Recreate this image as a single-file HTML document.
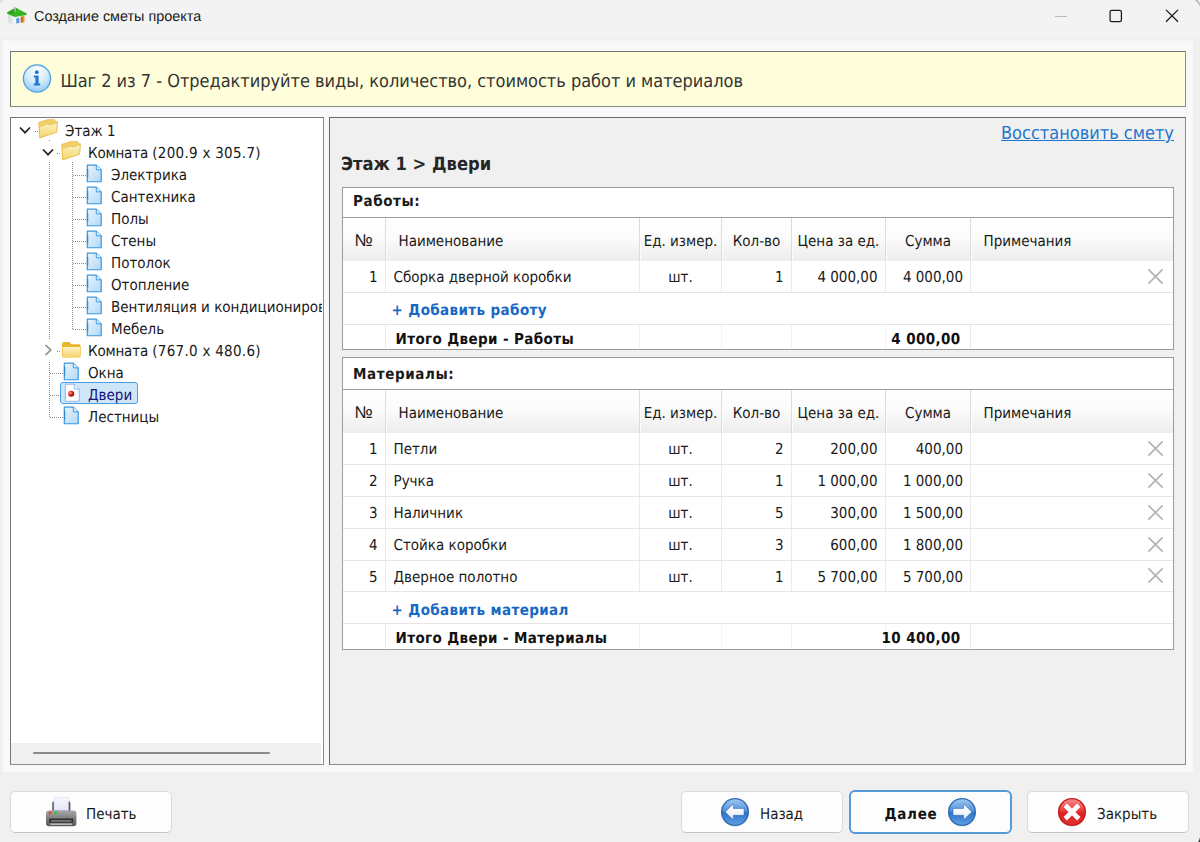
<!DOCTYPE html>
<html lang="ru">
<head>
<meta charset="utf-8">
<title>Создание сметы проекта</title>
<style>
*{box-sizing:border-box;margin:0;padding:0}
html,body{width:1200px;height:842px;overflow:hidden}
body{position:relative;background:#f0f0f0;text-rendering:geometricPrecision;font-family:"DejaVu Sans Condensed","DejaVu Sans","Liberation Sans",sans-serif;font-size:15px;color:#1a1a1a}
.abs{position:absolute}
#titlebar{left:0;top:0;width:1200px;height:43px;background:linear-gradient(to bottom,#f3f3f3 0,#f3f3f3 35px,#f0f0f0 38.5px,#f9f9f9 42px,#f9f9f9 43px)}
#title{left:34px;top:0;height:34px;line-height:34px;font-family:"Liberation Sans",sans-serif;font-size:14.4px;color:#1b1b1b;white-space:nowrap}
#frameR{left:1193px;top:40px;width:7px;height:802px;background:#f0f0f0}
#frameL{left:0;top:40px;width:3px;height:802px;background:#f0f0f0}
#upper{left:3px;top:42px;width:1190px;height:730px;background:#f9f9f9}
#info{left:10px;top:51px;width:1176px;height:56px;background:#fefeda;border:1px solid #8c8c8c;border-top-color:#767676;border-left-color:#767676}
#infotext{left:60.4px;top:53px;height:56px;line-height:57px;font-size:18px;letter-spacing:-0.02px;color:#333;white-space:nowrap}
#tree{left:10px;top:117px;width:314px;height:648px;background:#fff;border:1px solid #8c8c8c;border-top-color:#767676;border-left-color:#767676}
#treeclip{left:0;top:0;width:321.5px;height:764px;overflow:hidden}
#hscroll{left:11px;top:743px;width:310px;height:21px;background:#f0f0f0}
#hthumb{left:33px;top:752px;width:237px;height:2px;background:#8a8a8a;border-radius:1px}
#panel{left:329px;top:117px;width:857px;height:648px;background:#f0f0f0;border:1px solid #8c8c8c;border-top-color:#6a6a6a;border-left-color:#6a6a6a}
.tr{position:absolute;height:22px;line-height:22px;white-space:nowrap;font-size:15px;color:#1a1a1a}
.selt{color:#15157a}
.sel{background:#cfe6f9;border:1px solid #4a9fe6;border-radius:3px}
.vdot{width:1px;background-image:repeating-linear-gradient(to bottom,#8e8e8e 0,#8e8e8e 1px,transparent 1px,transparent 2px)}
.hdot{height:1px;background-image:repeating-linear-gradient(to right,#8e8e8e 0,#8e8e8e 1px,transparent 1px,transparent 2px)}
#crumb{left:341px;top:153px;height:24px;line-height:24px;font-size:18.2px;font-weight:bold;color:#262626;white-space:nowrap}
#restore{left:1001px;top:122px;height:24px;line-height:24px;font-size:18px;color:#2274cc;text-decoration:underline;white-space:nowrap}
.tbox{background:#fff;border:1px solid #9c9c9c}
.ttl{font-weight:bold;letter-spacing:0.6px;color:#222}
.hdr{background:linear-gradient(to bottom,#ffffff 0%,#fbfbfb 45%,#ededed 100%)}
.hsep{width:2px;background:linear-gradient(to right,#dcdcdc 0,#dcdcdc 1px,#fcfcfc 1px,#fcfcfc 2px)}
.dsep{width:1px;background:#ebebeb}
.dsep2{width:1px;background:#f3f3f3}
.rsep{height:1px;background:#e5e5e5}
.cell{white-space:nowrap;font-size:15px;line-height:18px;height:18px;color:#1a1a1a}
.add{font-weight:bold;letter-spacing:0.38px;color:#1768c4}
.tot{font-weight:bold;letter-spacing:0.38px;color:#111}
.btn{background:#fdfdfd;border:1px solid #dadada;border-bottom-color:#c4c4c4;border-radius:5px}
.btnf{border:2px solid #5599d9;border-radius:6px}
.btxt{height:20px;line-height:20px;font-size:15px;color:#1a1a1a;white-space:nowrap}
.btb{font-weight:bold;letter-spacing:0.72px;color:#111}
.no{font-family:"Liberation Sans",sans-serif;font-size:17px;line-height:1px;position:relative;left:-0.5px}
</style>
</head>
<body>
<svg width="0" height="0" style="position:absolute">
<defs>
<linearGradient id="gdoc" x1="0" y1="0" x2="1" y2="1"><stop offset="0" stop-color="#eaf5fd"/><stop offset="1" stop-color="#b3d8f4"/></linearGradient>
<linearGradient id="gfold" x1="0" y1="0" x2="0" y2="1"><stop offset="0" stop-color="#fdf2c4"/><stop offset="1" stop-color="#f5d468"/></linearGradient>
<radialGradient id="gred" cx="0.35" cy="0.35" r="0.7"><stop offset="0" stop-color="#ff9a9a"/><stop offset="0.5" stop-color="#e02020"/><stop offset="1" stop-color="#a00000"/></radialGradient>
<g id="doc"><path d="M1.3 1.2 H10.3 L15.2 6 V18.3 H1.3 Z" fill="url(#gdoc)" stroke="#3c97de" stroke-width="1.2" stroke-linejoin="round"/><path d="M10.3 1.2 V6 H15.2" fill="#e4f2fc" stroke="#3c97de" stroke-width="1"/><path d="M1.6 5 V14" stroke="#2f86cf" stroke-width="1.3"/></g>
<g id="docsel"><path d="M1.3 1.2 H10.3 L15.2 6 V18.3 H1.3 Z" fill="#fdfdff" stroke="#8db9e3" stroke-width="1" stroke-linejoin="round"/><path d="M10.3 1.2 V6 H15.2" fill="#eef5fc" stroke="#8db9e3" stroke-width="1"/><circle cx="7.2" cy="10.8" r="3" fill="url(#gred)"/></g>
<g id="fopen"><path d="M0.7 3.4 L9.9 0.6 L16.7 0.7 L17.4 2.8 L19.4 2.8 L18.5 13.2 L1.7 18.8 Z" fill="#f3d06a" stroke="#dfb344" stroke-width="0.7" stroke-linejoin="round"/><path d="M1.4 7.8 L9.9 5 L11.5 5.9 L19.2 3.8 L18.5 13.2 L1.7 18.8 Z" fill="url(#gfold)" stroke="#e2b94a" stroke-width="0.6" stroke-linejoin="round"/></g>
<g id="fclosed"><path d="M1 3 Q1 1 3 1 H8.5 L10.5 3.2 H18 Q19.6 3.2 19.6 4.8 V15 Q19.6 16.6 18 16.6 H2.6 Q1 16.6 1 15 Z" fill="#eab52e"/><path d="M1.6 6 H19 V14.8 Q19 16 17.8 16 H2.8 Q1.6 16 1.6 14.8 Z" fill="url(#gfold)"/></g>
</defs>
</svg>
<div id="titlebar" class="abs"></div>
<div id="frameL" class="abs"></div>
<div id="frameR" class="abs"></div>
<div id="title" class="abs">Создание сметы проекта</div>
<div id="upper" class="abs"></div>
<div id="info" class="abs"></div>
<div id="infotext" class="abs">Шаг 2 из 7 - Отредактируйте виды, количество, стоимость работ и материалов</div>
<div id="tree" class="abs"></div>
<div id="treeclip" class="abs">
<div class="abs vdot" style="left:49px;top:140px;height:1px"></div>
<div class="abs vdot" style="left:49px;top:162px;height:178px"></div>
<div class="abs vdot" style="left:49px;top:362px;height:56px"></div>
<div class="abs vdot" style="left:72px;top:162px;height:168px"></div>
<div class="abs hdot" style="left:35px;top:131px;width:4px"></div>
<div class="abs hdot" style="left:57px;top:153px;width:4px"></div>
<div class="abs hdot" style="left:57px;top:351px;width:4px"></div>
<div class="abs hdot" style="left:73px;top:175px;width:14px"></div>
<div class="abs hdot" style="left:73px;top:197px;width:14px"></div>
<div class="abs hdot" style="left:73px;top:219px;width:14px"></div>
<div class="abs hdot" style="left:73px;top:241px;width:14px"></div>
<div class="abs hdot" style="left:73px;top:263px;width:14px"></div>
<div class="abs hdot" style="left:73px;top:285px;width:14px"></div>
<div class="abs hdot" style="left:73px;top:307px;width:14px"></div>
<div class="abs hdot" style="left:73px;top:329px;width:14px"></div>
<div class="abs hdot" style="left:50px;top:373px;width:14px"></div>
<div class="abs hdot" style="left:50px;top:395px;width:14px"></div>
<div class="abs hdot" style="left:50px;top:417px;width:14px"></div>
<svg class="abs" style="left:18px;top:123px" width="14" height="14" viewBox="0 0 14 14"><path d="M2 4.5 L7 9.7 L12 4.5" fill="none" stroke="#222" stroke-width="1.7"/></svg>
<svg class="abs" style="left:38px;top:119px" width="21" height="20" viewBox="0 0 21 20"><use href="#fopen"/></svg>
<div class="tr" style="left:65px;top:120px">Этаж 1</div>
<svg class="abs" style="left:41px;top:145px" width="14" height="14" viewBox="0 0 14 14"><path d="M2 4.5 L7 9.7 L12 4.5" fill="none" stroke="#222" stroke-width="1.7"/></svg>
<svg class="abs" style="left:61px;top:141px" width="21" height="20" viewBox="0 0 21 20"><use href="#fopen"/></svg>
<div class="tr" style="left:88px;top:142px"><span style="letter-spacing:-0.18px">Комната</span> <span style="letter-spacing:0.28px">(200.9 x 305.7)</span></div>
<svg class="abs" style="left:86px;top:163.6px" width="17" height="19.4" preserveAspectRatio="none" viewBox="0 0 17 20"><use href="#doc"/></svg>
<div class="tr" style="left:111px;top:164px">Электрика</div>
<svg class="abs" style="left:86px;top:185.6px" width="17" height="19.4" preserveAspectRatio="none" viewBox="0 0 17 20"><use href="#doc"/></svg>
<div class="tr" style="left:111px;top:186px">Сантехника</div>
<svg class="abs" style="left:86px;top:207.6px" width="17" height="19.4" preserveAspectRatio="none" viewBox="0 0 17 20"><use href="#doc"/></svg>
<div class="tr" style="left:111px;top:208px">Полы</div>
<svg class="abs" style="left:86px;top:229.6px" width="17" height="19.4" preserveAspectRatio="none" viewBox="0 0 17 20"><use href="#doc"/></svg>
<div class="tr" style="left:111px;top:230px">Стены</div>
<svg class="abs" style="left:86px;top:251.6px" width="17" height="19.4" preserveAspectRatio="none" viewBox="0 0 17 20"><use href="#doc"/></svg>
<div class="tr" style="left:111px;top:252px">Потолок</div>
<svg class="abs" style="left:86px;top:273.6px" width="17" height="19.4" preserveAspectRatio="none" viewBox="0 0 17 20"><use href="#doc"/></svg>
<div class="tr" style="left:111px;top:274px">Отопление</div>
<svg class="abs" style="left:86px;top:295.6px" width="17" height="19.4" preserveAspectRatio="none" viewBox="0 0 17 20"><use href="#doc"/></svg>
<div class="tr" style="left:111px;top:296px">Вентиляция и кондиционирование</div>
<svg class="abs" style="left:86px;top:317.6px" width="17" height="19.4" preserveAspectRatio="none" viewBox="0 0 17 20"><use href="#doc"/></svg>
<div class="tr" style="left:111px;top:318px">Мебель</div>
<svg class="abs" style="left:41px;top:343px" width="14" height="14" viewBox="0 0 14 14"><path d="M4.5 2 L9.7 7 L4.5 12" fill="none" stroke="#8c8c8c" stroke-width="1.7"/></svg>
<svg class="abs" style="left:61px;top:341px" width="21" height="18" viewBox="0 0 21 18"><use href="#fclosed"/></svg>
<div class="tr" style="left:88px;top:340px"><span style="letter-spacing:-0.18px">Комната</span> <span style="letter-spacing:0.28px">(767.0 x 480.6)</span></div>
<svg class="abs" style="left:63px;top:361.6px" width="17" height="19.4" preserveAspectRatio="none" viewBox="0 0 17 20"><use href="#doc"/></svg>
<div class="tr" style="left:88px;top:362px">Окна</div>
<div class="abs sel" style="left:60px;top:382px;width:78px;height:22px"></div>
<svg class="abs" style="left:64px;top:383px" width="17" height="20" viewBox="0 0 17 20"><use href="#docsel"/></svg>
<div class="tr selt" style="left:88px;top:384px">Двери</div>
<svg class="abs" style="left:63px;top:405.6px" width="17" height="19.4" preserveAspectRatio="none" viewBox="0 0 17 20"><use href="#doc"/></svg>
<div class="tr" style="left:88px;top:406px">Лестницы</div>
</div>
<div id="hscroll" class="abs"></div>
<div id="hthumb" class="abs"></div>
<div id="panel" class="abs"></div>
<!-- title bar icon + controls -->
<svg class="abs" style="left:6px;top:5px" width="24" height="22" viewBox="6 5 24 22">
<defs><linearGradient id="gwall" x1="0" y1="0" x2="1" y2="0"><stop offset="0" stop-color="#d4d6d9"/><stop offset="1" stop-color="#f4f5f7"/></linearGradient></defs>
<path d="M8.4 14 L15 16.4 L15 25 L8.4 23 Z" fill="url(#gwall)"/>
<path d="M15 16.4 L25.6 13.8 L25.6 22.6 L15 25 Z" fill="#f3f4f6"/>
<path d="M16.2 18.6 L19.4 17.8 L19.4 22.9 L16.2 23.6 Z" fill="#5a9be6"/>
<path d="M20.6 16.6 L24.5 15.8 L24.5 22.2 L20.6 23 Z" fill="#e8943a"/>
<path d="M21.3 17 L22.6 16.8 L22.6 22.3 L21.3 22.6 Z" fill="#a8601a"/>
<path d="M7.2 12.6 L14.6 8.2 Q15.4 7.8 16.4 8.2 L27 13.6 L26.4 14.9 L15 17 L7.6 14 Z" fill="#35b522"/>
<path d="M7.2 12.6 L14.6 8.2 Q15.4 7.8 16.4 8.2 L18 9.1 L12.8 14 L7.6 13.4 Z" fill="#2aa317"/>
<rect x="14.2" y="7" width="1.7" height="4.6" fill="#b4b7ba"/>
</svg>
<div class="abs" style="left:1055px;top:16px;width:12px;height:1px;background:#b8babc"></div>
<svg class="abs" style="left:1108px;top:8px" width="16" height="16" viewBox="0 0 16 16"><rect x="2.1" y="2.3" width="11.3" height="11.3" rx="1.6" fill="none" stroke="#1a1a1a" stroke-width="1.25"/></svg>
<svg class="abs" style="left:1164px;top:8px" width="16" height="16" viewBox="0 0 16 16"><path d="M2 1.9 L14 13.7 M14 1.9 L2 13.7" fill="none" stroke="#1a1a1a" stroke-width="1.25"/></svg>
<svg class="abs" style="left:1192px;top:0" width="8" height="8" viewBox="0 0 8 8"><path d="M3.5 -0.5 Q7 2 8.5 6" fill="none" stroke="#b9babc" stroke-width="1.6"/></svg>
<svg class="abs" style="left:0;top:0" width="6" height="6" viewBox="0 0 6 6"><path d="M-0.5 2.5 Q1 1 2.5 -0.5" fill="none" stroke="#d0d1d3" stroke-width="1.2"/></svg>

<!-- info icon -->
<svg class="abs" style="left:21.2px;top:63.4px" width="32" height="32" viewBox="0 0 32 32">
<defs><radialGradient id="ginfo" cx="0.5" cy="0.25" r="0.85"><stop offset="0" stop-color="#ffffff"/><stop offset="0.45" stop-color="#d6ecfb"/><stop offset="1" stop-color="#7fc0f3"/></radialGradient></defs>
<circle cx="16" cy="15.5" r="13.6" fill="url(#ginfo)" stroke="#4f9fe0" stroke-width="1.3"/>
<circle cx="15.8" cy="9.2" r="1.9" fill="#1f78cf"/>
<path d="M12.8 12.6 H17.6 V20.6 H19.2 V22.4 H12.8 V20.6 H14.4 V14.4 H12.8 Z" fill="#1f78cf"/>
</svg>

<!-- buttons -->
<div class="abs btn" style="left:10px;top:791px;width:162px;height:42px"></div>
<div class="abs btn" style="left:681px;top:791px;width:162px;height:42px"></div>
<div class="abs btn btnf" style="left:849px;top:790px;width:163px;height:44px"></div>
<div class="abs btn" style="left:1027px;top:791px;width:162px;height:42px"></div>
<div class="abs btxt" style="left:86px;top:804px">Печать</div>
<div class="abs btxt" style="left:760px;top:804px">Назад</div>
<div class="abs btxt btb" style="left:884.5px;top:804px">Далее</div>
<div class="abs btxt" style="left:1097px;top:804px">Закрыть</div>

<!-- printer -->
<svg class="abs" style="left:44px;top:796px" width="34" height="32" viewBox="44 796 34 32">
<defs>
<linearGradient id="gpb" x1="0" y1="0" x2="0" y2="1"><stop offset="0" stop-color="#a9a9a9"/><stop offset="0.5" stop-color="#7d7d7d"/><stop offset="1" stop-color="#5a5a5a"/></linearGradient>
<linearGradient id="gpp" x1="0" y1="0" x2="0" y2="1"><stop offset="0" stop-color="#f6f7ff"/><stop offset="1" stop-color="#e3e6fb"/></linearGradient>
</defs>
<path d="M52.2 803 Q52.2 801.6 53.6 801.6 H69 Q70.4 801.6 70.4 803 V812 H52.2 Z" fill="#5c5c5c"/>
<rect x="54" y="797.6" width="14.4" height="13" fill="url(#gpp)" stroke="#d4d7ee" stroke-width="0.5"/>
<path d="M46 813.5 Q46 810.4 49 810.4 H73.4 Q76.4 810.4 76.4 813.5 V823.5 Q76.4 826.3 73.6 826.3 H48.8 Q46 826.3 46 823.5 Z" fill="url(#gpb)"/>
<rect x="49.2" y="818.6" width="24" height="4.2" rx="0.8" fill="#2e2e2e"/>
<rect x="50.5" y="823.4" width="21.4" height="1.6" fill="#b5b5b5"/>
<rect x="51" y="820.2" width="20.4" height="1.4" fill="#8a8a8a"/>
<circle cx="50.2" cy="812.8" r="1.5" fill="#e8452c"/>
<circle cx="55.6" cy="812.8" r="1.5" fill="#34c232"/>
</svg>

<!-- back -->
<svg class="abs" style="left:719.2px;top:796px" width="32" height="32" viewBox="0 0 32 32">
<defs>
<linearGradient id="gball" x1="0" y1="0" x2="0" y2="1"><stop offset="0" stop-color="#9cc6f1"/><stop offset="0.47" stop-color="#4f90d9"/><stop offset="0.53" stop-color="#2f73c7"/><stop offset="1" stop-color="#5c9ee3"/></linearGradient>
<linearGradient id="garr" x1="0" y1="0" x2="0" y2="1"><stop offset="0" stop-color="#ffffff"/><stop offset="1" stop-color="#e6effa"/></linearGradient>
<linearGradient id="grball" x1="0" y1="0" x2="0" y2="1"><stop offset="0" stop-color="#f58a8a"/><stop offset="0.45" stop-color="#ea3a3a"/><stop offset="0.55" stop-color="#dd2222"/><stop offset="1" stop-color="#e03030"/></linearGradient>
</defs>
<ellipse cx="16" cy="17.2" rx="13.6" ry="13.4" fill="#8a8a8a" opacity="0.28"/>
<circle cx="16" cy="16" r="14" fill="#2c68b3"/>
<circle cx="16" cy="16" r="12.7" fill="url(#gball)"/>
<path d="M6.2 15.9 L14.3 7.9 V12.4 H25 V19.3 H14.3 V23.8 Z" fill="url(#garr)" stroke="#2a62ad" stroke-width="0.5"/>
</svg>
<!-- next -->
<svg class="abs" style="left:945.5px;top:796px" width="32" height="32" viewBox="0 0 32 32">
<ellipse cx="16" cy="17.2" rx="13.6" ry="13.4" fill="#8a8a8a" opacity="0.28"/>
<circle cx="16" cy="16" r="14" fill="#2c68b3"/>
<circle cx="16" cy="16" r="12.7" fill="url(#gball)"/>
<path d="M25.8 15.9 L17.7 7.9 V12.4 H7 V19.3 H17.7 V23.8 Z" fill="url(#garr)" stroke="#2a62ad" stroke-width="0.5"/>
</svg>
<!-- close -->
<svg class="abs" style="left:1056.3px;top:796px" width="32" height="32" viewBox="0 0 32 32">
<ellipse cx="16" cy="17.2" rx="13.6" ry="13.4" fill="#8a8a8a" opacity="0.28"/>
<circle cx="16" cy="16" r="14" fill="#c31717"/>
<circle cx="16" cy="16" r="12.7" fill="url(#grball)"/>
<path d="M9.2 9.3 L22.8 22.7 M22.8 9.3 L9.2 22.7" stroke="#ffffff" stroke-width="4.8" stroke-linecap="butt" fill="none"/>
</svg>
<svg class="abs" style="left:1196px;top:836px" width="4" height="6" viewBox="0 0 4 6"><path d="M4 1.2 L4 6 L2.2 6 Q3.4 4 4 1.2 Z" fill="#2e2e2e"/></svg>
<div class="abs" id="crumb">Этаж 1 &gt; Двери</div>
<div class="abs" id="restore">Восстановить смету</div>
<div class="abs tbox" style="left:342px;top:187px;width:832px;height:163px"></div>
<div class="abs cell ttl" style="left:353px;top:192px;">Работы:</div>
<div class="abs" style="left:343px;top:217px;width:830px;height:1px;background:#a0a0a0"></div>
<div class="abs hdr" style="left:343px;top:218px;width:830px;height:43px"></div>
<div class="abs hsep" style="left:385px;top:218px;height:43px"></div>
<div class="abs hsep" style="left:639px;top:218px;height:43px"></div>
<div class="abs hsep" style="left:721px;top:218px;height:43px"></div>
<div class="abs hsep" style="left:791px;top:218px;height:43px"></div>
<div class="abs hsep" style="left:885px;top:218px;height:43px"></div>
<div class="abs hsep" style="left:970px;top:218px;height:43px"></div>
<div class="abs cell " style="left:343px;top:232px;width:42px;text-align:center;"><span class="no">№</span></div>
<div class="abs cell " style="left:386px;top:232px;width:253px;text-align:left;padding-left:12.5px;">Наименование</div>
<div class="abs cell " style="left:640px;top:232px;width:81px;text-align:center;">Ед. измер.</div>
<div class="abs cell " style="left:722px;top:232px;width:69px;text-align:center;">Кол-во</div>
<div class="abs cell " style="left:792px;top:232px;width:93px;text-align:center;">Цена за ед.</div>
<div class="abs cell " style="left:886px;top:232px;width:84px;text-align:center;">Сумма</div>
<div class="abs cell " style="left:971px;top:232px;width:202px;text-align:left;padding-left:12.5px;">Примечания</div>
<div class="abs dsep" style="left:385px;top:261px;height:31px"></div>
<div class="abs dsep" style="left:639px;top:261px;height:31px"></div>
<div class="abs dsep" style="left:721px;top:261px;height:31px"></div>
<div class="abs dsep" style="left:791px;top:261px;height:31px"></div>
<div class="abs dsep" style="left:885px;top:261px;height:31px"></div>
<div class="abs dsep" style="left:970px;top:261px;height:31px"></div>
<div class="abs rsep" style="left:343px;top:292px;width:830px"></div>
<div class="abs cell " style="left:343px;top:268px;width:42px;text-align:right;padding-right:7.5px">1</div>
<div class="abs cell " style="left:386px;top:268px;width:253px;padding-left:7.5px">Сборка дверной коробки</div>
<div class="abs cell " style="left:640px;top:268px;width:81px;text-align:center">шт.</div>
<div class="abs cell " style="left:722px;top:268px;width:69px;text-align:right;padding-right:7.5px">1</div>
<div class="abs cell " style="left:792px;top:268px;width:93px;text-align:right;padding-right:7.5px">4 000,00</div>
<div class="abs cell " style="left:886px;top:268px;width:84px;text-align:right;padding-right:7px">4 000,00</div>
<svg class="abs" style="left:1147px;top:267.8px" width="17" height="17" viewBox="0 0 17 17"><path d="M1.4 1.4 L15.6 15.6 M15.6 1.4 L1.4 15.6" stroke="#b0b0b0" stroke-width="1.5" fill="none"/></svg>
<div class="abs cell add" style="left:391.5px;top:301px;">+ Добавить работу</div>
<div class="abs rsep" style="left:343px;top:324px;width:830px"></div>
<div class="abs dsep" style="left:385px;top:325px;height:24px"></div>
<div class="abs dsep" style="left:970px;top:325px;height:24px"></div>
<div class="abs dsep2" style="left:639px;top:325px;height:24px"></div>
<div class="abs dsep2" style="left:721px;top:325px;height:24px"></div>
<div class="abs dsep2" style="left:791px;top:325px;height:24px"></div>
<div class="abs dsep2" style="left:885px;top:325px;height:24px"></div>
<div class="abs cell tot" style="left:395.5px;top:330px;">Итого Двери - Работы</div>
<div class="abs cell tot" style="left:846px;top:330px;width:124px;text-align:right;padding-right:9.5px">4 000,00</div>
<div class="abs tbox" style="left:342px;top:357px;width:832px;height:293px"></div>
<div class="abs cell ttl" style="left:353px;top:365px;">Материалы:</div>
<div class="abs" style="left:343px;top:389px;width:830px;height:1px;background:#a0a0a0"></div>
<div class="abs hdr" style="left:343px;top:390px;width:830px;height:43px"></div>
<div class="abs hsep" style="left:385px;top:390px;height:43px"></div>
<div class="abs hsep" style="left:639px;top:390px;height:43px"></div>
<div class="abs hsep" style="left:721px;top:390px;height:43px"></div>
<div class="abs hsep" style="left:791px;top:390px;height:43px"></div>
<div class="abs hsep" style="left:885px;top:390px;height:43px"></div>
<div class="abs hsep" style="left:970px;top:390px;height:43px"></div>
<div class="abs cell " style="left:343px;top:404px;width:42px;text-align:center;"><span class="no">№</span></div>
<div class="abs cell " style="left:386px;top:404px;width:253px;text-align:left;padding-left:12.5px;">Наименование</div>
<div class="abs cell " style="left:640px;top:404px;width:81px;text-align:center;">Ед. измер.</div>
<div class="abs cell " style="left:722px;top:404px;width:69px;text-align:center;">Кол-во</div>
<div class="abs cell " style="left:792px;top:404px;width:93px;text-align:center;">Цена за ед.</div>
<div class="abs cell " style="left:886px;top:404px;width:84px;text-align:center;">Сумма</div>
<div class="abs cell " style="left:971px;top:404px;width:202px;text-align:left;padding-left:12.5px;">Примечания</div>
<div class="abs dsep" style="left:385px;top:433px;height:31px"></div>
<div class="abs dsep" style="left:639px;top:433px;height:31px"></div>
<div class="abs dsep" style="left:721px;top:433px;height:31px"></div>
<div class="abs dsep" style="left:791px;top:433px;height:31px"></div>
<div class="abs dsep" style="left:885px;top:433px;height:31px"></div>
<div class="abs dsep" style="left:970px;top:433px;height:31px"></div>
<div class="abs rsep" style="left:343px;top:464px;width:830px"></div>
<div class="abs cell " style="left:343px;top:440px;width:42px;text-align:right;padding-right:7.5px">1</div>
<div class="abs cell " style="left:386px;top:440px;width:253px;padding-left:7.5px">Петли</div>
<div class="abs cell " style="left:640px;top:440px;width:81px;text-align:center">шт.</div>
<div class="abs cell " style="left:722px;top:440px;width:69px;text-align:right;padding-right:7.5px">2</div>
<div class="abs cell " style="left:792px;top:440px;width:93px;text-align:right;padding-right:7.5px">200,00</div>
<div class="abs cell " style="left:886px;top:440px;width:84px;text-align:right;padding-right:7px">400,00</div>
<svg class="abs" style="left:1147px;top:440.2px" width="17" height="17" viewBox="0 0 17 17"><path d="M1.4 1.4 L15.6 15.6 M15.6 1.4 L1.4 15.6" stroke="#b0b0b0" stroke-width="1.5" fill="none"/></svg>
<div class="abs dsep" style="left:385px;top:465px;height:31px"></div>
<div class="abs dsep" style="left:639px;top:465px;height:31px"></div>
<div class="abs dsep" style="left:721px;top:465px;height:31px"></div>
<div class="abs dsep" style="left:791px;top:465px;height:31px"></div>
<div class="abs dsep" style="left:885px;top:465px;height:31px"></div>
<div class="abs dsep" style="left:970px;top:465px;height:31px"></div>
<div class="abs rsep" style="left:343px;top:496px;width:830px"></div>
<div class="abs cell " style="left:343px;top:472px;width:42px;text-align:right;padding-right:7.5px">2</div>
<div class="abs cell " style="left:386px;top:472px;width:253px;padding-left:7.5px">Ручка</div>
<div class="abs cell " style="left:640px;top:472px;width:81px;text-align:center">шт.</div>
<div class="abs cell " style="left:722px;top:472px;width:69px;text-align:right;padding-right:7.5px">1</div>
<div class="abs cell " style="left:792px;top:472px;width:93px;text-align:right;padding-right:7.5px">1 000,00</div>
<div class="abs cell " style="left:886px;top:472px;width:84px;text-align:right;padding-right:7px">1 000,00</div>
<svg class="abs" style="left:1147px;top:472.1px" width="17" height="17" viewBox="0 0 17 17"><path d="M1.4 1.4 L15.6 15.6 M15.6 1.4 L1.4 15.6" stroke="#b0b0b0" stroke-width="1.5" fill="none"/></svg>
<div class="abs dsep" style="left:385px;top:497px;height:31px"></div>
<div class="abs dsep" style="left:639px;top:497px;height:31px"></div>
<div class="abs dsep" style="left:721px;top:497px;height:31px"></div>
<div class="abs dsep" style="left:791px;top:497px;height:31px"></div>
<div class="abs dsep" style="left:885px;top:497px;height:31px"></div>
<div class="abs dsep" style="left:970px;top:497px;height:31px"></div>
<div class="abs rsep" style="left:343px;top:528px;width:830px"></div>
<div class="abs cell " style="left:343px;top:504px;width:42px;text-align:right;padding-right:7.5px">3</div>
<div class="abs cell " style="left:386px;top:504px;width:253px;padding-left:7.5px">Наличник</div>
<div class="abs cell " style="left:640px;top:504px;width:81px;text-align:center">шт.</div>
<div class="abs cell " style="left:722px;top:504px;width:69px;text-align:right;padding-right:7.5px">5</div>
<div class="abs cell " style="left:792px;top:504px;width:93px;text-align:right;padding-right:7.5px">300,00</div>
<div class="abs cell " style="left:886px;top:504px;width:84px;text-align:right;padding-right:7px">1 500,00</div>
<svg class="abs" style="left:1147px;top:503.8px" width="17" height="17" viewBox="0 0 17 17"><path d="M1.4 1.4 L15.6 15.6 M15.6 1.4 L1.4 15.6" stroke="#b0b0b0" stroke-width="1.5" fill="none"/></svg>
<div class="abs dsep" style="left:385px;top:529px;height:31px"></div>
<div class="abs dsep" style="left:639px;top:529px;height:31px"></div>
<div class="abs dsep" style="left:721px;top:529px;height:31px"></div>
<div class="abs dsep" style="left:791px;top:529px;height:31px"></div>
<div class="abs dsep" style="left:885px;top:529px;height:31px"></div>
<div class="abs dsep" style="left:970px;top:529px;height:31px"></div>
<div class="abs rsep" style="left:343px;top:560px;width:830px"></div>
<div class="abs cell " style="left:343px;top:536px;width:42px;text-align:right;padding-right:7.5px">4</div>
<div class="abs cell " style="left:386px;top:536px;width:253px;padding-left:7.5px">Стойка коробки</div>
<div class="abs cell " style="left:640px;top:536px;width:81px;text-align:center">шт.</div>
<div class="abs cell " style="left:722px;top:536px;width:69px;text-align:right;padding-right:7.5px">3</div>
<div class="abs cell " style="left:792px;top:536px;width:93px;text-align:right;padding-right:7.5px">600,00</div>
<div class="abs cell " style="left:886px;top:536px;width:84px;text-align:right;padding-right:7px">1 800,00</div>
<svg class="abs" style="left:1147px;top:535.6px" width="17" height="17" viewBox="0 0 17 17"><path d="M1.4 1.4 L15.6 15.6 M15.6 1.4 L1.4 15.6" stroke="#b0b0b0" stroke-width="1.5" fill="none"/></svg>
<div class="abs dsep" style="left:385px;top:561px;height:30px"></div>
<div class="abs dsep" style="left:639px;top:561px;height:30px"></div>
<div class="abs dsep" style="left:721px;top:561px;height:30px"></div>
<div class="abs dsep" style="left:791px;top:561px;height:30px"></div>
<div class="abs dsep" style="left:885px;top:561px;height:30px"></div>
<div class="abs dsep" style="left:970px;top:561px;height:30px"></div>
<div class="abs rsep" style="left:343px;top:591px;width:830px"></div>
<div class="abs cell " style="left:343px;top:568px;width:42px;text-align:right;padding-right:7.5px">5</div>
<div class="abs cell " style="left:386px;top:568px;width:253px;padding-left:7.5px">Дверное полотно</div>
<div class="abs cell " style="left:640px;top:568px;width:81px;text-align:center">шт.</div>
<div class="abs cell " style="left:722px;top:568px;width:69px;text-align:right;padding-right:7.5px">1</div>
<div class="abs cell " style="left:792px;top:568px;width:93px;text-align:right;padding-right:7.5px">5 700,00</div>
<div class="abs cell " style="left:886px;top:568px;width:84px;text-align:right;padding-right:7px">5 700,00</div>
<svg class="abs" style="left:1147px;top:567.4px" width="17" height="17" viewBox="0 0 17 17"><path d="M1.4 1.4 L15.6 15.6 M15.6 1.4 L1.4 15.6" stroke="#b0b0b0" stroke-width="1.5" fill="none"/></svg>
<div class="abs cell add" style="left:391.5px;top:601px;">+ Добавить материал</div>
<div class="abs rsep" style="left:343px;top:623px;width:830px"></div>
<div class="abs dsep" style="left:385px;top:624px;height:25px"></div>
<div class="abs dsep" style="left:970px;top:624px;height:25px"></div>
<div class="abs dsep2" style="left:639px;top:624px;height:25px"></div>
<div class="abs dsep2" style="left:721px;top:624px;height:25px"></div>
<div class="abs dsep2" style="left:791px;top:624px;height:25px"></div>
<div class="abs dsep2" style="left:885px;top:624px;height:25px"></div>
<div class="abs cell tot" style="left:395.5px;top:629px;">Итого Двери - Материалы</div>
<div class="abs cell tot" style="left:846px;top:629px;width:124px;text-align:right;padding-right:9.5px">10 400,00</div>
</body>
</html>
